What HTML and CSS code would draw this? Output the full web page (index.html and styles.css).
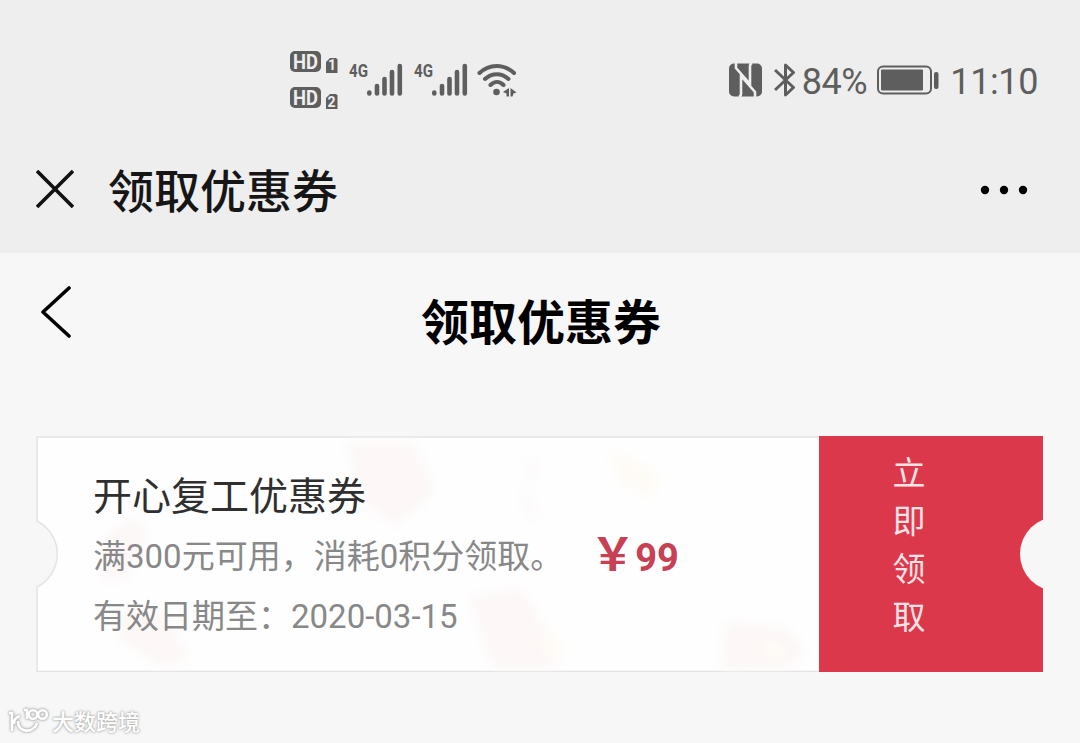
FILE: index.html
```html
<!DOCTYPE html>
<html lang="zh-CN">
<head>
    <meta charset="UTF-8">
    <meta name="viewport" content="width=device-width, initial-scale=1.0">
    <title>领取优惠券</title>
    <link rel="stylesheet" href="styles.css">
</head>
<body>
    <header class="top">
        <div class="status-bar">
            <div class="status-left">
                <svg class="hd" width="50" height="60" viewBox="0 0 50 60">
                    <rect x="0" y="1" width="31" height="21" rx="5"/>
                    <text class="hd-text" x="3" y="18.5" textLength="25" lengthAdjust="spacingAndGlyphs">HD</text>
                    <path d="M36 12l4-4h6l1.500 1.500V23H36z"/>
                    <text class="hd-num" x="38" y="20">1</text>
                    <rect x="0" y="37" width="31" height="21" rx="5"/>
                    <text class="hd-text" x="3" y="54.500" textLength="25" lengthAdjust="spacingAndGlyphs">HD</text>
                    <path d="M36 48l4-4h6l1.500 1.500V59H36z"/>
                    <text class="hd-num" x="37.500" y="57">2</text>
                </svg>
                <svg class="signal" width="56" height="36" viewBox="0 0 56 36">
                    <text class="net" x="0" y="16" textLength="19" lengthAdjust="spacingAndGlyphs">4G</text>
                    <path class="bars" d="M20.300 31.500v1M28 25v7.500M35.500 18v14.500M43 11v21.500M50.800 5v27.500"/>
                </svg>
                <svg class="signal" width="56" height="36" viewBox="0 0 56 36">
                    <text class="net" x="0" y="16" textLength="19" lengthAdjust="spacingAndGlyphs">4G</text>
                    <path class="bars" d="M20.300 31.500v1M28 25v7.500M35.500 18v14.500M43 11v21.500M50.800 5v27.500"/>
                </svg>
                <svg class="wifi" width="42" height="36" viewBox="0 0 42 36">
                    <path class="waves" d="M2.500 11C12 1.500 27 1.500 37 11M8 17c7-6.500 16.500-6.500 23.500 0M13.500 23c4-4 9-4 13 0"/>
                    <circle cx="19.500" cy="30" r="3.300"/>
                    <path d="M26 30l6-4v8.500h-2.500v-3zM33.500 26l6 4.500-3 1-1 3h-2z"/>
                </svg>
            </div>
            <div class="status-right">
                <svg width="33" height="34" viewBox="0 0 33 34">
                    <rect x="0" y="0.500" width="33" height="33" rx="5"/>
                    <path class="nfc-line" d="M7 0v5L21 21V3q0-2 2-3M26 34v-5L12 13v18q0 2-2 3"/>
                </svg>
                <svg class="bt" width="22" height="36" viewBox="0 0 22 36">
                    <path d="M1 8l18.500 17.500L11.500 33V3l8 7.500L1 28"/>
                </svg>
                <span class="percent">84%</span>
                <svg class="battery" width="62" height="30" viewBox="0 0 62 30">
                    <rect class="shell" x="1" y="1.500" width="53" height="27" rx="5"/>
                    <rect x="4" y="4.500" width="42" height="21" rx="1"/>
                    <rect x="57" y="7" width="4.500" height="17" rx="2"/>
                </svg>
                <span class="clock">11:10</span>
            </div>
        </div>
        <div class="nav-bar">
            <svg class="close" width="38" height="38" viewBox="0 0 38 38">
                <path d="M1 1l36 36M37 1L1 37"/>
            </svg>
            <span class="nav-title">领取优惠券</span>
            <svg class="more" width="48" height="10" viewBox="0 0 48 10">
                <circle cx="5" cy="5" r="4.200"/>
                <circle cx="24" cy="5" r="4.200"/>
                <circle cx="43" cy="5" r="4.200"/>
            </svg>
        </div>
    </header>

    <main>
        <div class="page-head">
            <svg class="back" width="30" height="52" viewBox="0 0 30 52">
                <path d="M28 2L2 26 28 50"/>
            </svg>
            <h1>领取优惠券</h1>
        </div>

        <div class="coupon">
            <svg class="coupon-bg" width="784" height="236" viewBox="0 0 784 236">
                <defs>
                    <filter id="soft" x="-20%" y="-20%" width="140%" height="140%">
                        <feGaussianBlur stdDeviation="6"/>
                    </filter>
                </defs>
                <path class="paper" d="M1 1H784V235.500H1V151A37 37 0 0 0 1 85z"/>
                <g class="petals" filter="url(#soft)">
                    <path d="M310 6h68l20 50-38 34-32-24z"/>
                    <path d="M70 100l30-20 12 20-20 40-24 6z"/>
                    <path d="M80 172l50 8 24 44-30 6-40-26z"/>
                    <path d="M434 162l52-10 38 70-10 10h-58z"/>
                    <path d="M690 186l60 6 20 24-20 16-66 2z"/>
                    <path d="M490 30l12-8-10 30 10 38-14-18z"/>
                    <path class="yellow" d="M570 16l24 6 30 20-10 20-28-16z"/>
                    <path class="yellow" d="M500 202l20-6 6 22-16 6zM726 204l22 2 4 14-24 2z"/>
                </g>
            </svg>
            <div class="coupon-info">
                <div class="coupon-text">
                    <h2>开心复工优惠券</h2>
                    <p>满300元可用，消耗0积分领取。</p>
                    <p>有效日期至：2020-03-15</p>
                </div>
                <div class="price"><span class="yen">￥</span>99</div>
            </div>
            <div class="claim">
                <span>立</span>
                <span>即</span>
                <span>领</span>
                <span>取</span>
            </div>
        </div>
    </main>

    <div class="watermark">
        <svg width="42" height="30" viewBox="0 0 42 30">
            <path d="M1 7h3v18M12 10c-4 1-6 4-6 8M10 15c-1 12 16 13 19 2M16 4h3v9"/>
            <circle cx="25" cy="8.500" r="4.300"/>
            <circle cx="34.500" cy="8.500" r="4.300"/>
        </svg>
        <span>大数跨境</span>
    </div>
</body>
</html>
```
FILE: styles.css
```css
:root {
    --bar: #eeeeee;
    --page: #f7f7f7;
    --icon: #5e5e5e;
    --red: #dc384b;
    --muted: #888888;
}

* {
    margin: 0;
    padding: 0;
    box-sizing: border-box;
}

body {
    height: 743px;
    overflow: hidden;
    position: relative;
    background: var(--page);
    font-family: Roboto, "Noto Sans CJK SC", sans-serif;
}

svg {
    display: block;
    flex-shrink: 0;
}

.top {
    height: 253px;
    background: var(--bar);
}

.status-bar {
    height: 127px;
    padding: 50px 42px 0 290px;
    display: flex;
    justify-content: space-between;
    color: var(--icon);
    fill: var(--icon);
}

.status-left {
    display: flex;
    align-items: center;
    height: 60px;
}

.hd-text {
    fill: var(--bar);
    font-size: 21px;
    font-weight: 700;
}

.hd-num {
    fill: var(--bar);
    font-size: 14px;
    font-weight: 700;
}

.signal {
    margin: -2px 0 0 9px;
    overflow: visible;
}

.net {
    font-size: 19px;
    font-weight: 700;
}

.bars {
    stroke: var(--icon);
    stroke-width: 4.6;
    stroke-linecap: round;
}

.wifi {
    margin-left: 7px;
}

.waves {
    fill: none;
    stroke: var(--icon);
    stroke-width: 4;
    stroke-linecap: round;
}

.status-right {
    display: flex;
    align-items: center;
    height: 60px;
    font-size: 36px;
    line-height: 60px;
}

.nfc-line {
    fill: none;
    stroke: var(--bar);
    stroke-width: 2.6;
}

.bt {
    margin-left: 12px;
    fill: none;
    stroke: var(--icon);
    stroke-width: 3;
    stroke-linejoin: round;
}

.percent {
    margin: 3px 0 0 6px;
    letter-spacing: -0.4px;
}

.battery {
    margin-left: 10px;
}

.shell {
    fill: none;
    stroke: var(--icon);
    stroke-width: 2;
}

.clock {
    margin: 3px 0 0 11px;
    letter-spacing: -0.4px;
}

.nav-bar {
    height: 124px;
    padding: 0 52px 0 36px;
    display: flex;
    align-items: center;
}

.close {
    fill: none;
    stroke: #111;
    stroke-width: 3.6;
}

.nav-title {
    margin: -2px 0 0 34px;
    font-size: 46px;
    font-weight: 500;
    color: #161616;
}

.more {
    margin: 2px 0 0 auto;
}

.page-head {
    height: 183px;
    padding: 33px 0 0 41px;
    display: flex;
    align-items: flex-start;
}

.back {
    fill: none;
    stroke: #000;
    stroke-width: 3.6;
    stroke-linecap: round;
    stroke-linejoin: round;
}

.page-head h1 {
    flex: 1;
    padding: 2px 69px 0 0;
    text-align: center;
    font-size: 48px;
    font-weight: 700;
    line-height: 72px;
}

.coupon {
    position: relative;
    display: flex;
    width: 1007px;
    height: 236px;
    margin-left: 36px;
}

.coupon-bg {
    position: absolute;
    left: 0;
    top: 0;
}

.paper {
    fill: #fefefe;
    stroke: #e3e3e3;
    stroke-width: 1.5;
}

.petals {
    fill: #fdf7f7;
}

.petals .yellow {
    fill: #fefbf5;
}

.coupon-info {
    position: relative;
    display: flex;
    align-items: center;
    width: 783px;
    padding: 5px 0 0 57px;
}

.coupon-text h2 {
    font-size: 39px;
    font-weight: 400;
    line-height: 60px;
    color: #2f2f2f;
}

.coupon-text p {
    font-size: 33px;
    line-height: 60px;
    color: var(--muted);
    white-space: nowrap;
}

.price {
    display: flex;
    align-items: baseline;
    margin-left: 27px;
    font-size: 38px;
    line-height: 60px;
    font-weight: 700;
    color: #c74054;
}

.yen {
    font-size: 45px;
}

.claim {
    position: relative;
    width: 224px;
    padding: 14px 44px 0 0;
    overflow: hidden;
    display: flex;
    flex-direction: column;
    align-items: center;
    background: var(--red);
    color: #fbe3e5;
    font-size: 33px;
    line-height: 48px;
}

/* ticket notch */
.claim::after {
    content: "";
    position: absolute;
    right: -51px;
    top: 81px;
    width: 74px;
    height: 74px;
    border-radius: 50%;
    background: var(--page);
}

.watermark {
    position: absolute;
    left: 8px;
    bottom: 4px;
    display: flex;
    align-items: center;
    color: #fff;
    font-size: 22px;
    font-weight: 500;
    line-height: 32px;
    text-shadow: 0 0 2px #aaa, 0 0 3px #aaa;
}

.watermark svg {
    margin-right: 2px;
    overflow: visible;
    fill: none;
    stroke: #fff;
    stroke-width: 2.6;
    filter: drop-shadow(0 0 1px #aaa) drop-shadow(0 0 1px #bbb);
}

.watermark span {
    margin-top: 4px;
}
```
